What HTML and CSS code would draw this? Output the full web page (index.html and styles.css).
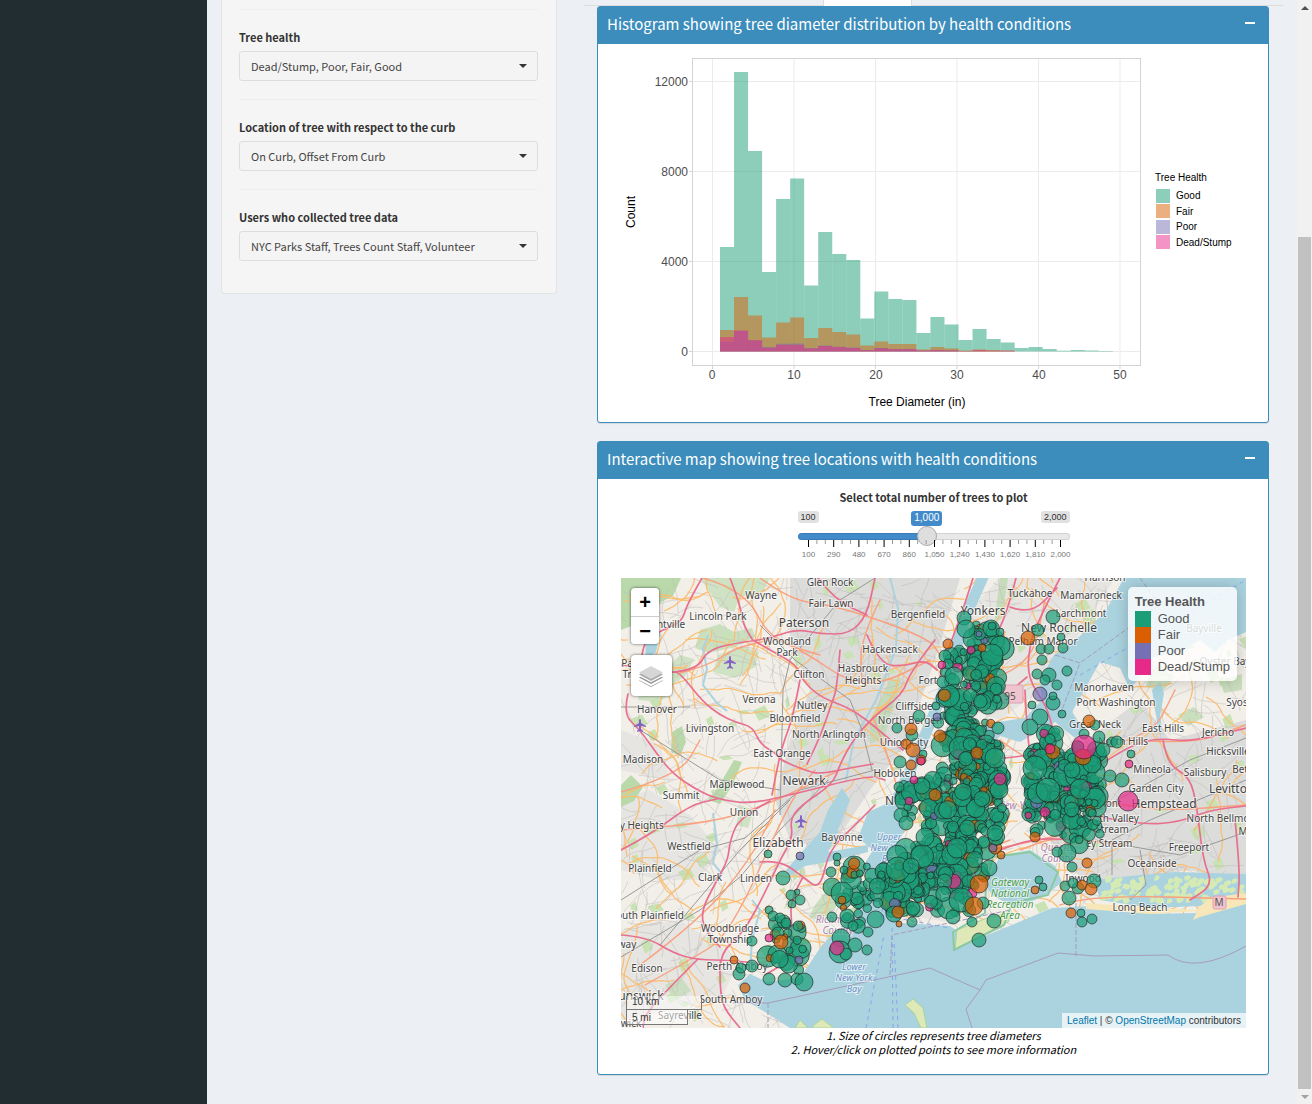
FILE: index.html
```html
<!DOCTYPE html>
<html lang="en">
<head>
<meta charset="utf-8">
<title>NYC Street Trees</title>
<link rel="stylesheet" href="styles.css">
</head>
<body>
<div class="app">
  <aside class="sidebar"></aside>
  <main class="content">
    <form class="filters">
      <div class="filter">
        <label for="health">Tree health</label>
        <div class="picker"><select id="health"><option>Dead/Stump, Poor, Fair, Good</option></select></div>
      </div>
      <div class="filter">
        <label for="curb">Location of tree with respect to the curb</label>
        <div class="picker"><select id="curb"><option>On Curb, Offset From Curb</option></select></div>
      </div>
      <div class="filter">
        <label for="users">Users who collected tree data</label>
        <div class="picker"><select id="users"><option>NYC Parks Staff, Trees Count Staff, Volunteer</option></select></div>
      </div>
    </form>
    <div class="panels">
      <div class="tabs"><span class="tab"></span></div>
      <section class="box">
        <header class="box-header"><h3>Histogram showing tree diameter distribution by health conditions</h3><button class="collapse" type="button" aria-label="Collapse"></button></header>
        <div class="box-body">
          <svg class="histogram" viewBox="608 54 650 358" id="histogram">
            <g class="grid">
              <path d="M692 81.5H1140M692 171.5H1140M692 261.5H1140M692 351.5H1140M712.5 58V365M794 58V365M875.5 58V365M957 58V365M1038.5 58V365M1120 58V365"/>
            </g>
            <g id="bars"></g>
            <rect class="frame" x="692.5" y="58.5" width="448" height="307"/>
            <path class="axis-tick" d="M689 81.5h3M689 171.5h3M689 261.5h3M689 351.5h3M712.5 366v3M794 366v3M875.5 366v3M957 366v3M1038.5 366v3M1120 366v3"/>
            <g class="axis y">
              <text x="688" y="86">12000</text><text x="688" y="176">8000</text><text x="688" y="266">4000</text><text x="688" y="356">0</text>
            </g>
            <g class="axis x">
              <text x="712" y="379">0</text><text x="794" y="379">10</text><text x="876" y="379">20</text><text x="957" y="379">30</text><text x="1039" y="379">40</text><text x="1120" y="379">50</text>
            </g>
            <text class="axis-title" x="917" y="406">Tree Diameter (in)</text>
            <text class="axis-title" transform="translate(635 212) rotate(-90)">Count</text>
            <g class="key">
              <text x="1155" y="181">Tree Health</text>
              <rect class="good" x="1156" y="189" width="14" height="14"/><text x="1176" y="199">Good</text>
              <rect class="fair" x="1156" y="204" width="14" height="14"/><text x="1176" y="215">Fair</text>
              <rect class="poor" x="1156" y="220" width="14" height="14"/><text x="1176" y="230">Poor</text>
              <rect class="dead" x="1156" y="235" width="14" height="14"/><text x="1176" y="246">Dead/Stump</text>
            </g>
          </svg>
        </div>
      </section>

      <section class="box">
        <header class="box-header"><h3>Interactive map showing tree locations with health conditions</h3><button class="collapse" type="button" aria-label="Collapse"></button></header>
        <div class="box-body map-body">
          <div class="slider">
            <label for="count">Select total number of trees to plot</label>
            <div class="slider-values"><span class="limit">100</span><output class="current" for="count">1,000</output><span class="limit">2,000</span></div>
            <input type="range" id="count" min="100" max="2000" value="1000">
            <svg class="ticks" id="ticks" viewBox="797 541 272 20"></svg>
          </div>
          <div class="map">
            <svg class="map-canvas" viewBox="621 578 625 450" preserveAspectRatio="xMidYMid slice">
              <rect class="land" x="621" y="578" width="625" height="450"/>
              <g class="urban">
                <path d="M790 578H960L935 660 905 745 870 790 830 850 790 840 775 800 790 740 810 690 790 640Z"/>
                <path d="M1000 578H1115L1075 640 1040 690 1000 720 940 700 960 620Z" opacity=".5"/>
                <path d="M1100 730 1140 700 1170 740 1246 720V885L1190 870 1090 885 1050 850 1060 760Z"/>
                <path d="M621 800 650 790 690 815 720 850 700 880 660 880 621 870ZM621 930 680 920 740 960 720 1000 621 1020ZM621 730 660 745 670 780 621 770Z" opacity=".55"/>
                <path d="M885 850 990 840 990 890 950 922 900 915 865 900Z" opacity=".6"/>
              </g>
              <g class="wood">
                <path d="M621 578h60l-8 18-12 6-14 18-26 10z"/><path d="M700 578h70l-8 15-22 4-6 15-14-5z" opacity=".6"/>
                <path d="M700 630l20-6 14 8 18-4 3 9-20 10-26 6-14-5z" opacity=".7"/>
                <path d="M718 655l24-9 17 6-4 15-20 11-22-6z" opacity=".6"/>
                <path d="M621 785l10-10 12 12-9 14-13 6z"/><path d="M672 732l10-6 4 16-6 14-9-4z"/><path d="M680 655l14 4-8 16-14 10-6-16z" opacity=".6"/>
                <path d="M708 800l12-16 14-24 8 2-10 24-12 18z"/><path d="M815 905l16-20 12 4-8 20-14 12-12-4z" opacity=".7"/>
                <path d="M640 690l20-4 12 8-14 8-20-2zM740 805l14 5-6 18-12-3zM665 985l16-8 10 14-16 10z" opacity=".6"/>
                <path d="M1000 578l8 0-6 40-8 6zM1150 670l10-5 14 13-12 14-16-6zM1178 715l16-8 10 10-16 9zM1220 680l22-6v16l-18 3z" opacity=".7"/>
                <path d="M870 720l20-40 12-2-18 60-14 6z" opacity=".7"/>
              </g>
              <g id="streets"></g>
              <g class="water">
                <path d="M738 985 750 974 767 982 800 978 822 945 846 922 862 902 873 880 882 906 902 923 950 926 962 934 955 948 1012 925 1052 908 1092 906 1150 914 1195 913 1246 903V1028H790L765 1012 745 1000Z"/>
                <path d="M868 812 895 800 905 830 893 852 882 872 872 884 862 868 873 850 858 838Z"/>
                <path d="M842 788 850 800 838 830 828 852 868 845 868 852 828 862 805 866 790 876 786 870 800 854 820 832 828 810Z"/>
                <path d="M1124 578H1246V632L1228 640 1215 652 1200 640 1180 652 1150 658 1142 672 1130 690 1120 668 1100 662 1090 680 1072 712 1084 730 1075 738 1055 722 1020 742 1000 736 982 752 968 795 958 790 974 748 985 724 1025 718 1042 700 1040 680 1054 655 1080 636 1105 612Z"/>
                <path d="M1000 856 1030 850 1055 866 1062 882 1045 896 1015 908 992 895 985 884Z"/>
                <path d="M1094 880 1130 876 1175 872 1246 874V900L1200 906 1150 908 1100 900Z"/>
                <path d="M1152 690l8-8 4 12-4 22 4 20-6-8zM645 640l9-12 6 6-4 18-10 8z"/>
              </g>
              <path class="river" d="M986 570 964 620 948 680 918 752 888 820"/>
              <path class="creek" d="M708 635l-5 14 4 20-4 16 14 18 10 8M713 813l4 30-4 20 10 12M890 578l8 30-2 40-20 52-22 40-8 40M752 900l8 10-8 30-2 30"/>
              <g class="marsh" id="marsh"></g>
              <path class="beach" d="M1086 903 1150 908 1196 910 1210 898 1246 893V904L1200 917 1193 920 1197 911 1150 914 1086 909Z"/>
              <path class="island" d="M905 1005l8-6 10 9 4 20h-6l-7-15zM957 930l30-12 25-6-4 10-53 27zM795 1028l5-8 8 8zM815 1024l7-5 12 9h-22z"/>
              <path class="park" d="M986 884 993 857 1030 852 1058 872 1048 895 1012 903 1004 925 954 950 953 932 985 913Z"/>
              <g class="rail" id="rail">
                <path d="M621 900 700 850 745 838 800 790 875 770M660 945 740 850 790 800M621 957 700 910 740 877 780 830 828 780M780 815 783 690 790 660 840 600 875 578M872 770 862 730 850 700 795 660 760 625M640 730 720 780 780 790M621 707H690M1112 875V840L1150 820 1246 780M1090 815 1190 760 1246 738M1130 900 1146 885 1140 850M1095 840 1180 855 1246 832"/>
              </g>
              <g class="primary">
                <path d="M680 673 710 665 735 648 770 640M621 792 680 775 700 740M621 830 700 825 760 808 840 770M640 965 700 920 750 860 775 810M780 640 810 655 845 680 880 685 930 660M760 578 790 600 830 605 880 620 930 640 940 655M645 985 690 960 730 935 790 800 815 770M873 717 890 760 900 800M990 850 1040 840 1080 830M985 680 1030 670 1045 600M1060 905 1090 895 1246 899M1120 845 1060 835 1020 850M1140 740 1190 745 1246 725M1085 750 1150 740 1175 690M703 578 745 590 770 640 820 655M1098 800 1150 812 1246 805M880 600 860 640 862 680M1000 740 1040 770 1100 780M930 830 960 860 1010 840"/>
              </g>
              <g class="motorway">
                <path d="M702 578 687 604 682 622 660 631 645 641 642 655"/>
                <path d="M621 665 673 672 680 673 703 702 720 715 735 722 753 727 760 744 777 754 780 760 807 771 820 774 850 768 873 764"/>
                <path d="M673 672 697 670 708 649 743 642 767 639 797 629 820 634 850 634 867 615 875 578"/>
                <path d="M730 578 740 604 743 624 752 639M818 578 835 600 867 615"/>
                <path d="M753 640 770 650 797 665 802 680 820 697 847 707 867 720 883 734 903 750"/>
                <path d="M628 694 623 714 640 730 657 754 673 774 697 790 717 799 750 804 790 795 870 775 885 780"/>
                <path d="M800 680 793 717 783 744 778 764 772 795M840 650 837 687 833 700 820 737 807 764M867 635 880 665 905 666 925 660 937 670"/>
                <path d="M935 640 910 672 903 694 873 717 853 740 840 764 833 784 800 806 790 820 793 837 780 860 763 897 743 933 720 953 720 987 723 1007 740 1028"/>
                <path d="M770 801 740 817 730 840 728 860 717 880 700 913 707 933 720 947"/>
                <path d="M621 935 647 937 673 953 697 960 733 960 767 965M697 960 670 987 645 1014 643 1028M621 850 650 835 690 805 717 799"/>
                <path d="M760 862 780 860 803 877 820 890 829 850 853 827 875 805M803 877 790 900 792 925 790 960 765 975"/>
                <path d="M973 578 963 610 950 644 940 677M1016 578 1008 610 990 650M1060 578 1040 617 1030 643 1027 677 1047 707 1053 730M1010 607 1030 615 1057 588M1025 690 1028 760 1045 820M1027 677 1000 700"/>
                <path d="M1100 765 1130 745 1160 738 1190 742 1246 728M1163 740 1167 764 1190 777 1197 807 1203 860 1213 885 1190 900M1235 820 1240 870 1238 897M1090 815 1140 825 1180 822 1210 810 1246 806M1000 850 1030 838 1080 840M945 740 990 760 1030 755M960 850 1000 835"/>
              </g>
              <g class="boundary">
                <path d="M733 1003 768 1003 930 968 980 990 966 1009 972 1028M980 990 986 980 1058 953 1095 956 1168 955Q1195 975 1246 946"/>
                <path class="dash" d="M1076 956V903M768 1003V1028M890 975 892 935 1010 910M1055 655 1080 663 1160 605 1140 578M1060 715 1080 663"/>
              </g>
              <path class="ferry" d="M866 1028 884 935M893 1028 892 925M898 1028 894 940M1080 675 1246 580M880 915 950 928M888 860 880 930"/>
              <g class="plane">
                <path id="plane" d="M730 656c1 0 1 1 1 4l5 3v1l-5-1v3l2 2v1l-3-1-3 1v-1l2-2v-3l-5 1v-1l5-3c0-3 0-4 1-4z"/>
                <use href="#plane" x="-90" y="63"/><use href="#plane" x="71" y="159"/>
              </g>
              <g class="shield"><rect x="997" y="685" width="26" height="18" rx="2"/><text x="1010" y="700">95</text><rect x="1213" y="896" width="13" height="13" rx="2"/><text x="1219" y="906">M</text></g>
              <g class="places">
                <text x="830" y="586">Glen Rock</text><text x="761" y="599">Wayne</text><text x="831" y="607">Fair Lawn</text><text x="718" y="620">Lincoln Park</text>
                <text x="918" y="618">Bergenfield</text><text x="671" y="628">ntville</text><text x="787" y="645">Woodland</text><text x="787" y="656">Park</text>
                <text x="890" y="653">Hackensack</text><text x="863" y="672">Hasbrouck</text><text x="863" y="684">Heights</text><text x="809" y="678">Clifton</text>
                <text x="928" y="684">Fort</text><text x="759" y="703">Verona</text><text x="657" y="713">Hanover</text><text x="812" y="709">Nutley</text>
                <text x="914" y="710">Cliffside</text><text x="795" y="722">Bloomfield</text><text x="829" y="738">North Arlington</text><text x="910" y="724">North Bergen</text>
                <text x="710" y="732">Livingston</text><text x="904" y="746">Union City</text><text x="782" y="757">East Orange</text><text x="643" y="763">Madison</text>
                <text x="895" y="777">Hoboken</text><text x="737" y="788">Maplewood</text><text x="681" y="799">Summit</text><text x="744" y="816">Union</text>
                <text x="639" y="829">ey Heights</text><text x="689" y="850">Westfield</text><text x="842" y="841">Bayonne</text><text x="650" y="872">Plainfield</text>
                <text x="710" y="881">Clark</text><text x="756" y="882">Linden</text><text x="650" y="919">outh Plainfield</text><text x="730" y="932">Woodbridge</text>
                <text x="730" y="943">Township</text><text x="627" y="948">way</text><text x="647" y="972">Edison</text><text x="737" y="970">Perth Amboy</text>
                <text x="731" y="1003">South Amboy</text><text x="680" y="1019">Sayreville</text><text x="631" y="1027">wick</text><text x="627" y="667">Pa</text><text x="627" y="678">Tr</text>
                <text x="1030" y="597">Tuckahoe</text><text x="1091" y="599">Mamaroneck</text><text x="1105" y="581">Harrison</text><text x="1081" y="617">Larchmont</text>
                <text x="1043" y="645">Pelham Manor</text><text x="1104" y="691">Manorhaven</text><text x="1116" y="706">Port Washington</text><text x="1095" y="728">Great Neck</text>
                <text x="1163" y="732">East Hills</text><text x="1123" y="745">North Hills</text><text x="1218" y="736">Jericho</text><text x="1237" y="706">Syos</text>
                <text x="1228" y="755">Hicksville</text><text x="1152" y="773">Mineola</text><text x="1205" y="776">Salisbury</text><text x="1240" y="773">Bet</text>
                <text x="1156" y="792">Garden City</text><text x="1109" y="807">mont</text><text x="1119" y="822">th Valley</text><text x="1218" y="822">North Bellmo</text>
                <text x="1112" y="833">Stream</text><text x="1109" y="847">ey Stream</text><text x="1243" y="835">M</text><text x="1189" y="851">Freeport</text>
                <text x="1152" y="867">Oceanside</text><text x="1083" y="882">Inwood</text><text x="1140" y="911">Long Beach</text><text x="1204" y="632">Bayville</text><text x="1225" y="665">Oyster Bay</text>
                <g class="city"><text x="804" y="627">Paterson</text><text x="804" y="785">Newark</text><text x="778" y="847">Elizabeth</text><text x="983" y="615">Yonkers</text>
                <text x="1059" y="632">New Rochelle</text><text x="1228" y="793">Levitto</text><text x="1164" y="808">Hempstead</text><text x="641" y="1000">unswick</text><text x="893" y="805">Ne</text></g>
                <g class="county"><text x="1018" y="809">New York</text><text x="1057" y="851">Queens</text><text x="1057" y="862">County</text><text x="838" y="923">Richmond</text><text x="838" y="934">County</text></g>
                <g class="sea"><text x="889" y="840">Upper</text><text x="889" y="851">New York</text><text x="889" y="862">Bay</text><text x="854" y="970">Lower</text><text x="854" y="981">New York</text><text x="854" y="992">Bay</text></g>
                <g class="reserve"><text x="1010" y="886">Gateway</text><text x="1010" y="897">National</text><text x="1010" y="908">Recreation</text><text x="1010" y="919">Area</text></g>
              </g>
              <g class="trees" id="trees"></g>
            </svg>
            <div class="zoom"><button type="button" aria-label="Zoom in">+</button><button type="button" aria-label="Zoom out">−</button></div>
            <button class="layers" type="button" aria-label="Layers">
              <svg viewBox="0 0 26 26"><path fill="#8c8c8c" d="M13 11 25 17.500 13 24 1 17.500Z"/><path fill="#fff" d="M13 9.500 26 16.500 13 23.200 0 16.500Z"/><path fill="#999" d="M13 8 25 14.500 13 21 1 14.500Z"/><path fill="#fff" d="M13 6 26 12.500 13 19.200 0 12.500Z"/><path fill="#aaa" d="M13 5 25 11.500 13 18 1 11.500Z"/><path fill="#d6d6d6" d="M13 3 25 9.500 13 16 1 9.500Z"/></svg>
            </button>
            <div class="legend">
              <strong>Tree Health</strong>
              <div><i class="good"></i>Good</div><div><i class="fair"></i>Fair</div><div><i class="poor"></i>Poor</div><div><i class="dead"></i>Dead/Stump</div>
            </div>
            <div class="scale"><span class="km">10 km</span><span class="mi">5 mi</span></div>
            <div class="attribution"><a href="#leaflet">Leaflet</a> | © <a href="#osm">OpenStreetMap</a> contributors</div>
          </div>
          <p class="notes">1. Size of circles represents tree diameters<br>2. Hover/click on plotted points to see more information</p>
        </div>
      </section>
    </div>
  </main>
  <div class="scrollbar"><span class="arrow up"></span><span class="thumb"></span><span class="arrow down"></span></div>
</div>
<script src="charts.js"></script>
</body>
</html>
```
FILE: styles.css
```css
* { box-sizing: border-box; }
body {
  margin: 0;
  background: #ecf0f5;
  color: #333;
  font: 11px/18px "Noto Sans CJK SC", "Noto Sans", sans-serif;
}
.app { display: flex; min-height: 100vh; }
.sidebar { flex: 0 0 207px; background: #222d32; }
.content {
  flex: 1;
  min-width: 0;
  display: grid;
  grid-template-columns: 336px minmax(0, 1fr);
  column-gap: 27px;
  align-items: start;
  padding: 0 14px 29px;
}

/* Filters */
.filters {
  padding: 9px 18px 32px 17px;
  background: #f5f5f5;
  border: 1px solid #e3e3e3;
  border-top: 0;
  border-radius: 0 0 4px 4px;
}
.filter { padding: 18px 0; border-top: 1px solid #eee; }
.filter:last-child { padding-bottom: 0; }
.filter label { display: block; margin-bottom: 5px; font-weight: 700; }
.picker { position: relative; }
.picker select {
  appearance: none;
  display: block;
  width: 100%;
  height: 30px;
  padding: 0 26px 0 11px;
  border: 1px solid #ddd;
  border-radius: 3px;
  background: #f4f4f4;
  color: #444;
  font: inherit;
}
.picker::after {
  content: "";
  position: absolute;
  top: 13px;
  right: 11px;
  border: 4px solid transparent;
  border-top-color: #333;
  border-bottom: 0;
}

/* Boxes */
.tabs { display: flex; height: 6px; border-bottom: 1px solid #ddd; padding-left: 239px; }
.tab { width: 89px; height: 6px; background: #fff; border: 1px solid #ddd; border-width: 0 1px; }
.box {
  margin: 0 14px 18px 13px;
  border: 1px solid #3c8dbc;
  border-radius: 3px;
  background: #fff;
  box-shadow: 0 1px 1px rgba(0, 0, 0, .1);
}
.box:last-child { margin-bottom: 0; }
.box-header {
  display: flex;
  justify-content: space-between;
  align-items: center;
  height: 37px;
  padding: 0 13px 3px 9px;
  background: #3c8dbc;
  color: #fff;
}
.box-header h3 { margin: 0; font-size: 15px; line-height: 20px; font-weight: 400; }
.collapse { width: 10px; height: 12px; padding: 0; border: 0; background: linear-gradient(#fff, #fff) 0 4px / 10px 2px no-repeat; }
.box-body { padding: 10px; }
.histogram { display: block; width: 100%; }
.grid path { stroke: #ebebeb; fill: none; }
.frame { fill: none; stroke: #d4d4d4; }
.axis-tick { stroke: #d4d4d4; }
svg text { font-family: "Liberation Sans", Arial, sans-serif; }
.axis text { font-size: 12px; fill: #4d4d4d; }
.axis.y text { text-anchor: end; }
.axis.x text, .axis-title { text-anchor: middle; }
.axis-title { font-size: 12px; fill: #000; }
.key text { font-size: 10px; fill: #000; }
.key rect, #bars rect { fill-opacity: .5; }
.good { fill: #1b9e77; background: #1b9e77; }
.fair { fill: #d95f02; background: #d95f02; }
.poor { fill: #7570b3; background: #7570b3; }
.dead { fill: #e7298a; background: #e7298a; }

/* Slider */
.map-body { padding: 9px 22px 18px 23px; }
.slider { width: 272px; margin: 0 auto; text-align: center; }
.slider label { display: block; font-weight: 700; margin-bottom: 5px; }
.slider-values {
  display: flex;
  justify-content: space-between;
  align-items: start;
  height: 15px;
  font: 10px/12px "Liberation Sans", Arial, sans-serif;
}
.limit { padding: 0 3px; border-radius: 3px; background: #e1e1e1; color: #333; font-size: 9px; }
.current { padding: 1px 3px 2px; border-radius: 3px; background: #428bca; color: #fff; margin: 0 12px 0 6px; }
.slider input {
  appearance: none;
  display: block;
  width: 100%;
  height: 20px;
  margin: 0;
  background: none;
}
.slider input::-webkit-slider-runnable-track {
  height: 7px;
  border-radius: 4px;
  background: linear-gradient(90deg, #428bca 47%, #e9e9e9 47%);
  box-shadow: inset 0 0 0 1px rgba(0, 0, 0, .1);
}
.slider input::-webkit-slider-thumb {
  appearance: none;
  width: 20px;
  height: 20px;
  margin-top: -7px;
  border: 1px solid #aaa;
  border-radius: 50%;
  background: #dedede;
}
.ticks { display: block; width: 100%; height: 20px; margin-top: -6px; overflow: visible; }
.ticks text { font-size: 8px; fill: #777; text-anchor: middle; }

/* Map */
.map { position: relative; height: 450px; margin-top: 18px; overflow: hidden; font: 12px/16px "Liberation Sans", Arial, sans-serif; }
.map-canvas { display: block; width: 100%; height: 100%; }
.land { fill: #f2efe9; }
.urban { fill: #dcdcda; }
.wood { fill: #b9d9ab; }
.copse { fill: #c8e2b4; }
.water { fill: #aad3df; }
.river, .creek { fill: none; stroke: #aad3df; }
.river { stroke-width: 11px; }
.creek { stroke-width: 2px; }
.beach { fill: #f7e6b8; }
.island { fill: #dfe9b8; stroke: #a5d3a0; }
.park { fill: none; stroke: #8cc9a0; stroke-width: 2px; }
.marsh path { fill: #d6ebb4; }
.rail { fill: none; stroke: #999; stroke-width: 1px; }
.primary, .motorway { fill: none; stroke-linejoin: round; stroke-linecap: round; }
.primary { stroke: #f9a07e; stroke-width: 1.4px; }
.motorway { stroke: #e8708f; stroke-width: 1.7px; }
.local { fill: none; stroke: #bdbab8; stroke-width: 1px; opacity: .5; }
.secondary { fill: none; stroke: #fbbd70; stroke-width: 1.2px; }
.boundary { fill: none; stroke: #a79bbd; }
.dash { stroke-dasharray: 5 2; }
.ferry { fill: none; stroke: #8aa4e6; stroke-dasharray: 4 4; }
.plane { fill: #8461c4; }
.shield rect { fill: #f0c4cf; stroke: #dca3b2; }
.map .shield text { font-size: 10px; fill: #555; text-anchor: middle; stroke: none; }
.map-canvas text { font-family: "Noto Sans", sans-serif; }
.places text { font-size: 10px; fill: #444; text-anchor: middle; paint-order: stroke; stroke: rgba(255, 255, 255, .6); stroke-width: 2px; }
.places .city text { font-size: 12px; }
.places .county text { fill: #ac86ad; font-style: italic; }
.places .sea text { fill: #6b8fc4; font-style: italic; font-size: 9px; }
.places .reserve text { fill: #4e9d4e; font-style: italic; }
.trees circle { fill-opacity: .7; stroke: #222; stroke-opacity: .65; }
.zoom, .layers, .legend, .scale, .attribution { position: absolute; }
.zoom { top: 10px; left: 10px; width: 28px; border-radius: 4px; box-shadow: 0 0 3px rgba(0, 0, 0, .65); overflow: hidden; }
.zoom button { display: block; width: 28px; height: 28px; padding: 0; border: 0; background: #fff; color: #000; font: bold 20px/28px "Liberation Sans", Arial, sans-serif; }
.zoom button + button { border-top: 1px solid #ccc; line-height: 26px; }
.layers { top: 77px; left: 10px; width: 41px; height: 41px; padding: 7px; border: 0; border-radius: 4px; background: #fff; box-shadow: 0 0 3px rgba(0, 0, 0, .65); }
.layers svg { display: block; width: 26px; height: 26px; }
.legend { top: 9px; right: 9px; padding: 6px 7px; border-radius: 5px; background: rgba(255, 255, 255, .8); box-shadow: 0 0 15px rgba(0, 0, 0, .2); color: #555; font-size: 13px; }
.legend strong { display: block; line-height: 18px; }
.legend div { display: flex; }
.legend i { width: 16px; height: 16px; margin-right: 7px; }
.scale { left: 5px; bottom: 3px; font-size: 10px; line-height: 12px; color: #333; }
.scale span { display: block; border: 1px solid #777; background: rgba(255, 255, 255, .5); padding-left: 5px; }
.scale .km { width: 76px; border-top: 0; height: 14px; }
.scale .mi { width: 62px; height: 15px; border-width: 0 1px 1px; padding-top: 2px; }
.attribution { right: 0; bottom: 0; padding: 0 5px; background: rgba(255, 255, 255, .7); font-size: 10px; line-height: 15px; }
.attribution a { color: #0078a8; text-decoration: none; }
.notes { margin: 0; text-align: center; font-style: italic; line-height: 14px; color: #000; }

/* Page scrollbar */
.scrollbar { flex: 0 0 15px; display: flex; flex-direction: column; align-items: center; background: #f1f1f1; }
.thumb { width: 13px; height: 852px; margin-top: auto; background: #c1c1c1; }
.arrow { height: 15px; }
.arrow::before { content: ""; display: block; margin-top: 6px; border: 4px solid transparent; }
.up::before { border-top: 0; border-bottom-color: #505050; }
.down::before { border-bottom: 0; border-top-color: #a3a3a3; }
```
FILE: charts.js
```js
const NS = "http://www.w3.org/2000/svg";
function add(parent, tag, attrs, text) {
  const el = document.createElementNS(NS, tag);
  for (const k in attrs) el.setAttribute(k, attrs[k]);
  if (text) el.textContent = text;
  parent.appendChild(el);
}
const byId = id => document.getElementById(id);

// Histogram: top edge of each bin, by health class
const BASE = 351.5, tops = {
  good: [247, 72, 151, 272, 199, 178.5, 285.5, 232, 254, 260, 318.5, 291.5, 299, 300, 333, 317, 324.5, 340, 329, 339, 342.5, 348, 347, 349, 350.7, 350, 350.5, 351],
  fair: [330, 297, 315.5, 337.5, 322.5, 317.5, 338, 328, 332, 334.5, 345.5, 341.5, 344, 344, 349.5, 347, 348.5, 350.5, 349.5, 350, 350.5],
  poor: [341.7, 331, 340.5, 347, 343.8, 343.5, 348, 345.5, 346.7, 347.5, 350, 348, 349, 349, 350.7, 350, 350.5],
  dead: [337, 330.5, 340, 347.7, 344.8, 344.8, 348.5, 346, 347, 348, 350, 348.3, 349.2, 349.2, 350.5, 350, 350.3, 351, 350, 350.7, 350.7]
};
for (const cls in tops) tops[cls].forEach((y, i) =>
  add(byId("bars"), "rect", { class: cls, x: 720 + 14.03 * i, y, width: 14.03, height: BASE - y }));

// Slider ticks
for (let i = 0; i <= 30; i++) {
  const big = i % 3 === 0, x = 807.5 + i * 8.4;
  add(byId("ticks"), "path", { d: `M${x} 541v${big ? 7 : 4}`, stroke: big ? "#000" : "#999" });
  if (big) add(byId("ticks"), "text", { x, y: 558 }, (100 + i / 3 * 190).toLocaleString("en-US"));
}

// Round the corners of the road lines
for (const path of document.querySelectorAll(".motorway path, .primary path")) {
  path.setAttribute("d", path.getAttribute("d").split("M").filter(Boolean).map(line => {
    const n = line.trim().split(/\s+/).map(Number), last = n.length - 2;
    let d = `M${n[0]} ${n[1]}`;
    for (let i = 2; i < last; i += 2) d += `Q${n[i]} ${n[i + 1]} ${(n[i] + n[i + 2]) / 2} ${(n[i + 1] + n[i + 3]) / 2}`;
    return d + `L${n[last]} ${n[last + 1]}`;
  }).join(""));
}

// Repeatable random numbers for the street network and the sampled trees
let seed = 20157;
const rnd = () => (seed = (seed * 16807) % 2147483647) / 2147483647;

for (let i = 0; i < 170; i++) {
  const x = 621 + rnd() * 620, y = 578 + rnd() * 440, w = 3 + rnd() * 9, h = 3 + rnd() * 8;
  add(byId("streets"), "path", { class: "copse", d: `M${x} ${y}l${w} ${-h / 2} ${w / 2} ${h} ${-w} ${h / 2}z` });
}
function wander(cls, n, step, len, bend) {
  for (let k = 0; k < n; k++) {
    let x = 621 + rnd() * 625, y = 578 + rnd() * 450, a = rnd() * 6.3, d = `M${x | 0} ${y | 0}`;
    for (let i = 0; i < len; i++) {
      a += (rnd() - .5) * bend;
      x += Math.cos(a) * step; y += Math.sin(a) * step;
      d += `L${x.toFixed(1)} ${y.toFixed(1)}`;
    }
    add(byId("streets"), "path", { class: cls, d });
  }
}
wander("local", 950, 6, 6, .5);
wander("secondary", 190, 6, 14, .7);
for (let i = 0; i < 110; i++) {
  const x = 1096 + rnd() * 145, y = 877 + rnd() * 24;
  add(byId("marsh"), "path", { d: `M${x | 0} ${y | 0}l${2 + rnd() * 4 | 0} -2 3 2 -2 3 -4 1z` });
}

// Sampled trees: dense areas as [x0, x1, y0, y1, count]
const areas = [[968,1003,625,660,26],[945,1000,650,690,55],[975,1002,670,705,24],[943,985,695,725,34],[938,992,722,745,30],[942,975,735,775,32],[958,1002,742,800,105],[900,925,785,822,22],[925,1002,775,830,110],[942,1000,825,850,38],[905,985,840,880,75],[890,975,870,912,80],[880,925,855,895,28],[842,900,862,905,44],[838,885,905,930,9],[1028,1103,752,815,120],[1030,1060,732,765,20],[1060,1100,745,800,30],[1028,1100,790,835,50],[1070,1103,800,845,22],[767,803,915,970,24]];
const trees = [];
for (const [x0, x1, y0, y1, n] of areas) for (let i = 0; i < n; i++) {
  const u = rnd(), c = rnd();
  const cls = c < .86 ? "good" : c < .94 ? "fair" : c < .97 ? "poor" : "dead";
  const r = cls === "good" ? 3.5 + 8 * u * u : 3.2 + 4 * u * u;
  trees.push([x0 + rnd() * (x1 - x0), y0 + rnd() * (y1 - y0), r, cls]);
}
const single = {
  good: "964 618 7,966 629 9,992 626 4,1000 632 4,1000 646 10,992 655 11,945 656 6,948 664 5,943 682 6,954 676 9,936 706 4,919 716 6,998 728 6,768 854 4,783 878 7,797 892 3,791 895 5,800 900 5,792 904 4,769 910 4,773 916 5,780 918 5,786 923 5,798 926 5,752 941 5,778 933 6,739 974 6,741 968 5,752 966 6,769 979 6,785 980 7,797 979 6,804 982 9,837 857 4,837 863 3,831 872 5,844 870 4,832 887 9,842 893 11,832 917 5,847 916 7,853 926 5,841 938 9,840 952 11,855 945 7,867 950 5,868 932 5,846 954 6,894 914 8,912 922 5,989 868 8,983 903 6,961 900 12,994 921 7,972 922 5,953 917 7,979 940 7,1039 880 4,1043 887 4,1072 867 5,1067 853 9,1057 852 5,1094 881 7,1078 888 6,1065 886 5,1073 883 5,1069 898 7,1081 913 4,1082 922 5,1092 919 5,1053 617 7,1038 630 6,1061 637 4,1041 649 5,1049 649 5,1063 648 5,1042 660 5,1067 671 5,1037 674 5,1049 675 7,1045 680 5,1057 685 5,1053 703 7,1053 696 4,1062 714 4,1032 705 4,1040 717 8,1030 727 8,1095 725 5,1084 734 5,1099 737 6,1103 750 7,1112 742 5,1117 742 6,1131 754 4,1110 776 6,1122 780 7,897 728 5,912 735 6,900 762 6,923 754 4,922 786 8,899 787 5,901 815 7,906 823 7,925 837 9,957 848 10,995 758 10,999 790 9,995 833 8,1035 768 12,1048 790 12,1080 789 10,1072 770 8,1092 764 9,1050 739 5,898 869 12,911 866 8",
  fair: "948 644 5,781 942 7,734 960 4,745 988 5,842 900 4,898 912 6,899 924 3,979 884 9,974 906 9,1001 855 4,1035 890 4,1087 863 5,1082 885 5,1091 889 6,1071 913 5,1028 638 7,1089 721 6,911 729 6,906 744 5,913 750 7,911 765 5,921 760 5,935 795 6,1083 757 8,1053 752 7,940 736 6,977 753 6,1035 837 5,982 648 4",
  poor: "800 856 4,799 960 4,993 848 4,1040 694 7,937 717 4,979 634 3",
  dead: "769 938 4,837 948 7,1128 801 10,942 665 4,1129 764 4,1084 747 12,1050 749 5,921 761 4,914 780 4,909 801 4,971 650 4,1045 812 5,1000 779 6"
};
for (const cls in single) for (const t of single[cls].split(",")) trees.push([...t.split(" "), cls]);
for (const [cx, cy, r, cls] of trees) add(byId("trees"), "circle", { cx, cy, r, class: cls });
```
